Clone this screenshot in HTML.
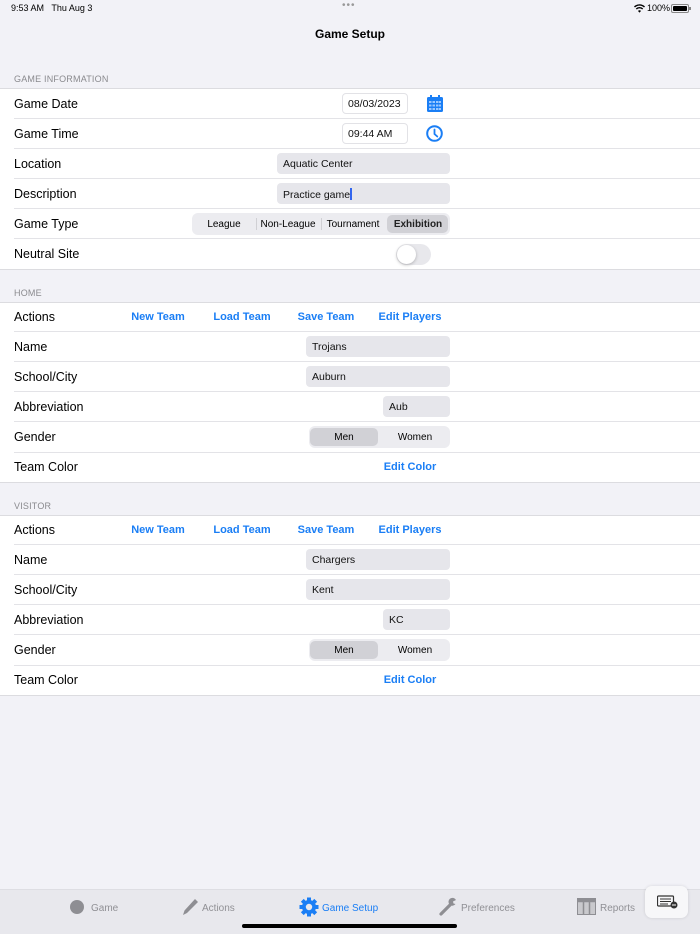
<!DOCTYPE html>
<html><head><meta charset="utf-8"><style>
*{margin:0;padding:0;box-sizing:border-box}
body{width:700px;height:934px;background:#f2f2f7;font-family:"Liberation Sans",sans-serif;position:relative;overflow:hidden;color:#000}
.a{position:absolute}
.sec{position:absolute;left:0;width:700px;background:#fff;border-top:1px solid #dcdce0;border-bottom:1px solid #dcdce0}
.row{position:absolute;left:0;width:700px;height:30px}
.row .lb{position:absolute;left:14px;top:8px;font-size:12.5px}
.sep{position:absolute;left:14px;right:0;height:1px;background:#e3e3e7}
.hd{position:absolute;left:14px;font-size:9px;color:#8a8a8e;letter-spacing:.2px}
.fld{position:absolute;height:21px;background:#e6e6eb;border-radius:4px;font-size:10.5px;padding:5px 6px;color:#111}
.box{position:absolute;height:21px;background:#fff;border:1px solid #e2e2e6;border-radius:4px;font-size:10.5px;padding:4px 5px;color:#111}
.btn{position:absolute;font-size:11px;font-weight:bold;color:#1a7ef5;transform:translateX(-50%);white-space:nowrap}
.seg{position:absolute;height:22px;background:#ececf0;border-radius:6px;font-size:10px}
.seg span{position:absolute;top:6px;transform:translateX(-50%);white-space:nowrap}
.sel{position:absolute;top:2px;height:18px;background:#d1d1d6;border-radius:5px}
.tab{position:absolute;top:902px;font-size:10px;color:#909095}
</style></head><body>
<div class="a" style="left:11px;top:3px;font-size:9px">9:53 AM&nbsp;&nbsp; Thu Aug 3</div>
<div class="a" style="left:342px;top:0px;font-size:10px;color:#999;letter-spacing:1px">•••</div>
<svg class="a" style="left:634px;top:4px" width="11" height="9" viewBox="0 0 11 9"><path d="M0.5 3 A7 7 0 0 1 10.5 3" stroke="#000" stroke-width="1.4" fill="none"/><path d="M2.3 5 A4.5 4.5 0 0 1 8.7 5" stroke="#000" stroke-width="1.4" fill="none"/><path d="M4 7 L5.5 8.6 L7 7 A2.2 2.2 0 0 0 4 7Z" fill="#000"/></svg>
<div class="a" style="left:647px;top:3px;font-size:9px">100%</div>
<div class="a" style="left:671px;top:4px;width:18px;height:9px;border:1px solid #888;border-radius:2px;padding:1px"><div style="width:100%;height:100%;background:#000;border-radius:1px"></div></div>
<div class="a" style="left:689px;top:7px;width:1.5px;height:3px;background:#888"></div>
<div class="a" style="left:0;width:700px;top:27px;text-align:center;font-size:12px;font-weight:bold">Game Setup</div>

<div class="hd" style="top:74px">GAME INFORMATION</div>
<div class="sec" style="top:88px;height:182px"></div>
<div class="row" style="top:89px"><div class="lb">Game Date</div></div>
<div class="sep" style="top:118px"></div>
<div class="row" style="top:119px"><div class="lb">Game Time</div></div>
<div class="sep" style="top:148px"></div>
<div class="row" style="top:149px"><div class="lb">Location</div></div>
<div class="sep" style="top:178px"></div>
<div class="row" style="top:179px"><div class="lb">Description</div></div>
<div class="sep" style="top:208px"></div>
<div class="row" style="top:209px"><div class="lb">Game Type</div></div>
<div class="sep" style="top:238px"></div>
<div class="row" style="top:239px"><div class="lb">Neutral Site</div></div>

<div class="box" style="left:342px;top:93px;width:66px">08/03/2023</div>
<svg class="a" style="left:427px;top:95px" width="16" height="17" viewBox="0 0 16 17"><rect x="0" y="2" width="16" height="15" rx="1.5" fill="#1a7ef5"/><rect x="3" y="0" width="2" height="4" fill="#1a7ef5"/><rect x="11" y="0" width="2" height="4" fill="#1a7ef5"/><g fill="#9cc8ff"><rect x="2" y="6" width="2.5" height="2"/><rect x="5.5" y="6" width="2.5" height="2"/><rect x="9" y="6" width="2.5" height="2"/><rect x="12" y="6" width="2" height="2"/><rect x="2" y="9.5" width="2.5" height="2"/><rect x="5.5" y="9.5" width="2.5" height="2"/><rect x="9" y="9.5" width="2.5" height="2"/><rect x="12" y="9.5" width="2" height="2"/><rect x="2" y="13" width="2.5" height="2"/><rect x="5.5" y="13" width="2.5" height="2"/><rect x="9" y="13" width="2.5" height="2"/><rect x="12" y="13" width="2" height="2"/></g></svg>
<div class="box" style="left:342px;top:123px;width:66px">09:44 AM</div>
<svg class="a" style="left:426px;top:125px" width="17" height="17" viewBox="0 0 17 17"><circle cx="8.5" cy="8.5" r="7.3" stroke="#1a7ef5" stroke-width="2" fill="none"/><path d="M8.5 4.5V9L11.3 11.5" stroke="#1a7ef5" stroke-width="1.8" fill="none" stroke-linecap="round"/></svg>
<div class="fld" style="left:277px;top:153px;width:173px">Aquatic Center</div>
<div class="fld" style="left:277px;top:183px;width:173px">Practice game<span style="display:inline-block;width:1.5px;height:12px;background:#3366ee;vertical-align:-2px"></span></div>
<div class="seg" style="left:192px;top:213px;width:258px">
<div class="sel" style="left:195px;width:61px"></div>
<span style="left:32px">League</span><span style="left:96px">Non-League</span><span style="left:161px">Tournament</span><span style="left:226px;font-weight:bold;color:#222">Exhibition</span>
<div class="a" style="left:64px;top:5px;width:1px;height:12px;background:#d0d0d4"></div>
<div class="a" style="left:129px;top:5px;width:1px;height:12px;background:#d0d0d4"></div>
</div>
<div class="a" style="left:396px;top:244px;width:35px;height:21px;border-radius:11px;background:#e8e8ec"></div>
<div class="a" style="left:397px;top:245px;width:19px;height:19px;border-radius:50%;background:#fff;box-shadow:0 1px 3px rgba(0,0,0,.25)"></div>

<div class="hd" style="top:288px">HOME</div>
<div class="sec" style="top:302px;height:181px"></div>
<div class="row" style="top:302px"><div class="lb">Actions</div></div>
<div class="sep" style="top:331px"></div>
<div class="row" style="top:332px"><div class="lb">Name</div></div>
<div class="sep" style="top:361px"></div>
<div class="row" style="top:362px"><div class="lb">School/City</div></div>
<div class="sep" style="top:391px"></div>
<div class="row" style="top:392px"><div class="lb">Abbreviation</div></div>
<div class="sep" style="top:421px"></div>
<div class="row" style="top:422px"><div class="lb">Gender</div></div>
<div class="sep" style="top:452px"></div>
<div class="row" style="top:452px"><div class="lb">Team Color</div></div>
<div class="btn" style="left:158px;top:311px">New Team</div>
<div class="btn" style="left:242px;top:311px">Load Team</div>
<div class="btn" style="left:326px;top:311px">Save Team</div>
<div class="btn" style="left:410px;top:311px">Edit Players</div>
<div class="fld" style="left:306px;top:336px;width:144px">Trojans</div>
<div class="fld" style="left:306px;top:366px;width:144px">Auburn</div>
<div class="fld" style="left:383px;top:396px;width:67px">Aub</div>
<div class="seg" style="left:309px;top:426px;width:141px"><div class="sel" style="left:1px;width:68px"></div><span style="left:35px">Men</span><span style="left:106px">Women</span></div>
<div class="btn" style="left:410px;top:461px">Edit Color</div>

<div class="hd" style="top:501px">VISITOR</div>
<div class="sec" style="top:515px;height:181px"></div>
<div class="row" style="top:515px"><div class="lb">Actions</div></div>
<div class="sep" style="top:544px"></div>
<div class="row" style="top:545px"><div class="lb">Name</div></div>
<div class="sep" style="top:574px"></div>
<div class="row" style="top:575px"><div class="lb">School/City</div></div>
<div class="sep" style="top:604px"></div>
<div class="row" style="top:605px"><div class="lb">Abbreviation</div></div>
<div class="sep" style="top:634px"></div>
<div class="row" style="top:635px"><div class="lb">Gender</div></div>
<div class="sep" style="top:665px"></div>
<div class="row" style="top:665px"><div class="lb">Team Color</div></div>
<div class="btn" style="left:158px;top:524px">New Team</div>
<div class="btn" style="left:242px;top:524px">Load Team</div>
<div class="btn" style="left:326px;top:524px">Save Team</div>
<div class="btn" style="left:410px;top:524px">Edit Players</div>
<div class="fld" style="left:306px;top:549px;width:144px">Chargers</div>
<div class="fld" style="left:306px;top:579px;width:144px">Kent</div>
<div class="fld" style="left:383px;top:609px;width:67px">KC</div>
<div class="seg" style="left:309px;top:639px;width:141px"><div class="sel" style="left:1px;width:68px"></div><span style="left:35px">Men</span><span style="left:106px">Women</span></div>
<div class="btn" style="left:410px;top:674px">Edit Color</div>

<div class="a" style="left:0;top:889px;width:700px;height:45px;background:#e8e8ed;border-top:1px solid #dedee3"></div>
<div class="a" style="left:70px;top:900px;width:14px;height:14px;border-radius:50%;background:#8e8e93"></div>
<div class="tab" style="left:91px;top:903px">Game</div>
<svg class="a" style="left:182px;top:898px" width="17" height="18" viewBox="0 0 17 18"><path d="M13 1L16 4L5 15L1 17L2.5 12.5Z" fill="#8e8e93"/></svg>
<div class="tab" style="left:202px;top:903px">Actions</div>
<svg class="a" style="left:299px;top:897px" width="20" height="20" viewBox="0 0 20 20"><g fill="#1a7ef5"><circle cx="10" cy="10" r="7"/><rect x="8" y="0.5" width="4" height="4"/><rect x="8" y="15.5" width="4" height="4"/><rect x="0.5" y="8" width="4" height="4"/><rect x="15.5" y="8" width="4" height="4"/><rect x="8" y="0.5" width="4" height="4" transform="rotate(45 10 10)"/><rect x="8" y="15.5" width="4" height="4" transform="rotate(45 10 10)"/><rect x="0.5" y="8" width="4" height="4" transform="rotate(45 10 10)"/><rect x="15.5" y="8" width="4" height="4" transform="rotate(45 10 10)"/></g><circle cx="10" cy="10" r="3.2" fill="#e8e8ed"/></svg>
<div class="tab" style="left:322px;top:903px;color:#1a7ef5">Game Setup</div>
<svg class="a" style="left:439px;top:897px" width="19" height="19" viewBox="0 0 19 19"><path d="M2 17L11 8" stroke="#8e8e93" stroke-width="3.2" stroke-linecap="round"/><path d="M11 8A4 4 0 1 1 17 3L14 4.5L14.5 6.5L16.5 7A4 4 0 0 1 11 8Z" fill="#8e8e93"/></svg>
<div class="tab" style="left:461px;top:903px">Preferences</div>
<svg class="a" style="left:577px;top:898px" width="19" height="17" viewBox="0 0 19 17"><rect x="0.5" y="0.5" width="18" height="16" fill="none" stroke="#8e8e93"/><rect x="0.5" y="0.5" width="18" height="4" fill="#8e8e93"/><path d="M6.5 4v12M12.5 4v12" stroke="#8e8e93" stroke-width="1.5"/><rect x="1" y="5" width="17" height="11" fill="#8e8e93" opacity=".35"/></svg>
<div class="tab" style="left:600px;top:903px">Reports</div>
<div class="a" style="left:645px;top:886px;width:43px;height:32px;background:#f7f7f9;border-radius:7px;box-shadow:0 0 3px rgba(0,0,0,.12)"></div>
<svg class="a" style="left:657px;top:895px" width="22" height="14" viewBox="0 0 22 14"><rect x="0.5" y="1" width="16" height="10" rx="1" fill="none" stroke="#333" stroke-width="1.2"/><path d="M3 4h11M3 6.5h11M3 9h8" stroke="#333" stroke-width="1"/><circle cx="17" cy="10" r="3.5" fill="#333"/><path d="M15 10h4" stroke="#fff" stroke-width="1"/></svg>
<div class="a" style="left:242px;top:924px;width:215px;height:4px;border-radius:2px;background:#000"></div>
</body></html>
